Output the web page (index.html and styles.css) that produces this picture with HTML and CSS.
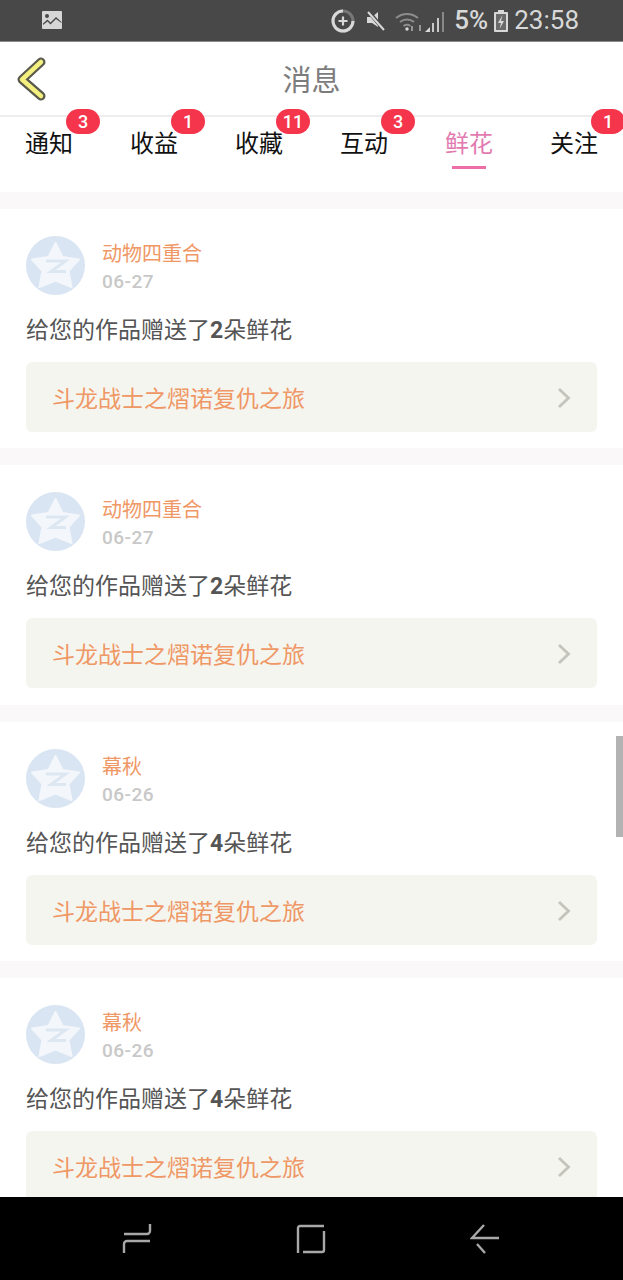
FILE: index.html
```html
<!DOCTYPE html>
<html lang="zh">
<head>
<meta charset="utf-8">
<title>消息</title>
<link rel="stylesheet" href="styles.css">
</head>
<body>
<svg class="defs" width="0" height="0">
  <symbol id="qz" viewBox="0 0 59 59">
    <circle cx="29.5" cy="29.5" r="29.5" fill="#d9e5f2"/>
    <path d="M29.5 7 L36.500 21 L53 23.500 L42.500 35 L45.500 51 L29.500 44.500 L13.500 51 L16.500 35 L6 23.500 L22.500 21 Z" fill="#f3f6fa" stroke="#f3f6fa" stroke-width="2" stroke-linejoin="round"/>
    <path d="M20 25 H39.500 L25 35.500 H40" fill="none" stroke="#dde7f2" stroke-width="3"/>
  </symbol>
  <symbol id="chev" viewBox="0 0 14 22">
    <path d="M2 2 L11.500 11 L2 20" fill="none" stroke="#c4c4bd" stroke-width="2.800"/>
  </symbol>
</svg>
<div class="screen">
  <div class="status">
    <svg class="st-img" width="20" height="21" viewBox="0 0 20 21"><path fill="#d6d6d6" d="M1 2h18a1 1 0 0 1 1 1v16a1 1 0 0 1-1 1H1a1 1 0 0 1-1-1V3a1 1 0 0 1 1-1z"/><circle cx="5" cy="7" r="2" fill="#484848"/><path fill="#484848" d="M1 14.500l4.500-4 3 3 5.500-5.500 5.500 5V4.500h0V14l-5.500-4-5.500 5.500-3-3-4.500 3.500z"/></svg>
    <div class="st-right">
      <svg width="26" height="26" viewBox="0 0 26 26"><circle cx="13" cy="13" r="10" fill="none" stroke="#777" stroke-width="3"/><path d="M13 3a10 10 0 1 0 10 10" fill="none" stroke="#d8d8d8" stroke-width="3"/><path d="M13 8.500v9M8.500 13h9" stroke="#d8d8d8" stroke-width="2.200"/></svg>
      <svg class="st-mute" width="24" height="24" viewBox="0 0 24 24"><path fill="#d8d8d8" d="M2 8h5l6-5v15l-6-4H2z"/><path d="M3 2l17 20" stroke="#484848" stroke-width="4"/><path d="M3 3l16 18" stroke="#d8d8d8" stroke-width="2"/></svg>
      <svg class="st-net" width="52" height="24" viewBox="0 0 52 24"><path d="M1 9a17 17 0 0 1 22 0M5 13a11 11 0 0 1 14 0M8.500 17a6 6 0 0 1 7 0" fill="none" stroke="#8d8d8d" stroke-width="2"/><circle cx="12" cy="20" r="1.700" fill="#d8d8d8"/><path d="M17 17v5M25 22v-6" stroke="#aaa" stroke-width="1.600"/><path fill="#d8d8d8" d="M30 23h5v-5z"/><path d="M38 23v-9M43 23V9" stroke="#c8c8c8" stroke-width="2"/><path d="M48 23V3" stroke="#888" stroke-width="2"/></svg>
      <span class="st-text st-pct">5%</span>
      <svg class="st-bat" width="14" height="22" viewBox="0 0 14 22"><path fill="#d8d8d8" d="M4 0h6v2h3a1 1 0 0 1 1 1v18a1 1 0 0 1-1 1H1a1 1 0 0 1-1-1V3a1 1 0 0 1 1-1h3z"/><path fill="#6a6a6a" d="M2 4h10v16H2z"/><path fill="#d8d8d8" d="M8.500 5L4 13h3l-1.500 6L10 11H7z"/></svg>
      <span class="st-text st-time">23:58</span>
    </div>
  </div>

  <header class="topbar">
    <svg class="back" width="30" height="44" viewBox="0 0 30 44"><path d="M25 5 L6 22.500 L25 39" fill="none" stroke="#5a5a4c" stroke-width="9" stroke-linecap="round" stroke-linejoin="round"/><path d="M25 5 L6 22.500 L25 39" fill="none" stroke="#f4f080" stroke-width="4.500" stroke-linecap="round" stroke-linejoin="round"/></svg>
    <h1 class="title">消息</h1>
  </header>

  <nav class="tabs">
    <div class="tab"><span>通知</span><b class="badge">3</b></div>
    <div class="tab"><span>收益</span><b class="badge">1</b></div>
    <div class="tab"><span>收藏</span><b class="badge">11</b></div>
    <div class="tab"><span>互动</span><b class="badge">3</b></div>
    <div class="tab active"><span>鲜花</span></div>
    <div class="tab"><span>关注</span><b class="badge">1</b></div>
  </nav>

  <main class="feed">
    <article class="card">
      <div class="who">
        <svg class="avatar"><use href="#qz"/></svg>
        <div class="meta"><div class="name">动物四重合</div><div class="date">06-27</div></div>
      </div>
      <p class="msg">给您的作品赠送了<b>2</b>朵鲜花</p>
      <div class="work"><span>斗龙战士之熠诺复仇之旅</span><svg class="more"><use href="#chev"/></svg></div>
    </article>
    <article class="card">
      <div class="who">
        <svg class="avatar"><use href="#qz"/></svg>
        <div class="meta"><div class="name">动物四重合</div><div class="date">06-27</div></div>
      </div>
      <p class="msg">给您的作品赠送了<b>2</b>朵鲜花</p>
      <div class="work"><span>斗龙战士之熠诺复仇之旅</span><svg class="more"><use href="#chev"/></svg></div>
    </article>
    <article class="card">
      <div class="who">
        <svg class="avatar"><use href="#qz"/></svg>
        <div class="meta"><div class="name">幕秋</div><div class="date">06-26</div></div>
      </div>
      <p class="msg">给您的作品赠送了<b>4</b>朵鲜花</p>
      <div class="work"><span>斗龙战士之熠诺复仇之旅</span><svg class="more"><use href="#chev"/></svg></div>
    </article>
    <article class="card">
      <div class="who">
        <svg class="avatar"><use href="#qz"/></svg>
        <div class="meta"><div class="name">幕秋</div><div class="date">06-26</div></div>
      </div>
      <p class="msg">给您的作品赠送了<b>4</b>朵鲜花</p>
      <div class="work"><span>斗龙战士之熠诺复仇之旅</span><svg class="more"><use href="#chev"/></svg></div>
    </article>
    <div class="thumb"></div>
  </main>

  <footer class="softkeys">
    <svg width="30" height="32" viewBox="0 0 30 32"><path d="M28 1v7a3 3 0 0 1-3 3H2M28 18H5a3 3 0 0 0-3 3v9" fill="none" stroke="#a8a8a8" stroke-width="2.400"/></svg>
    <svg width="30" height="30" viewBox="0 0 30 30"><path d="M28 2H4a2 2 0 0 0-2 2v25M7 28h19a2 2 0 0 0 2-2V7" fill="none" stroke="#a8a8a8" stroke-width="2.400"/></svg>
    <svg width="30" height="32" viewBox="0 0 30 32"><path d="M29 15H2L14 2M7 21l8 9" fill="none" stroke="#a8a8a8" stroke-width="2.400"/></svg>
  </footer>
</div>
</body>
</html>
```
FILE: styles.css
```css
* { box-sizing: border-box; }
html, body { margin: 0; padding: 0; }
body { font-family: "Noto Sans CJK SC", "Noto Sans", sans-serif; background: #fff; }
.defs { display: block; height: 0; }
.screen { width: 623px; height: 1280px; display: flex; flex-direction: column; overflow: hidden; }

.status { flex: 0 0 42px; background: #484848; border-bottom: 1px solid #8a8a8a; display: flex; align-items: center; justify-content: space-between; padding: 0 44px 0 42px; color: #d8d8d8; }
.st-img { margin-top: -2px; }
.st-right { display: flex; align-items: center; height: 41px; }
.st-mute { margin-left: 9px; }
.st-net { margin-left: 6px; }
.st-text { font-family: Roboto, sans-serif; font-size: 26px; font-weight: 500; line-height: 41px; }
.st-pct { margin-left: 7px; }
.st-bat { margin-left: 6px; }
.st-time { margin-left: 6px; font-weight: 400; }

.topbar { flex: 0 0 75px; display: flex; align-items: center; justify-content: center; position: relative; border-bottom: 2px solid #ededed; }
.back { position: absolute; left: 16px; top: 15px; }
.title { margin: 0; font-size: 29px; font-weight: 400; color: #7c7c7c; line-height: 73px; }

.tabs { flex: 0 0 75px; display: grid; grid-template-columns: repeat(6, 105px); margin-left: -3.5px; width: 630px; }
.tab { position: relative; display: flex; justify-content: center; padding-top: 7px; font-size: 24px; line-height: 36px; color: #111; }
.tab.active { color: #e27bb0; }
.tab.active::after { content: ""; position: absolute; left: 35px; top: 49px; width: 34px; height: 3px; background: #ee6fa8; }
.badge { position: absolute; left: 69.5px; top: -8px; width: 34px; height: 25px; border-radius: 12.5px; background: #f5354b; color: #fff; font-family: Roboto, sans-serif; font-size: 18px; font-weight: 500; line-height: 25px; text-align: center; }

.feed { flex: 1 1 auto; position: relative; overflow: hidden; min-height: 0; }
.card { height: 256.4px; border-top: 17px solid #faf8f8; padding: 27px 26px 0; }
.who { display: flex; height: 59px; }
.avatar { width: 59px; height: 59px; flex: none; }
.meta { margin-left: 17px; }
.name { font-size: 20px; line-height: 28px; height: 28px; margin-top: 3px; color: #ef9765; }
.date { margin-top: 2px; font-family: Roboto, sans-serif; font-size: 19px; font-weight: 500; line-height: 26px; color: #c8c8c8; letter-spacing: .5px; }
.msg { margin: 15px 0 0; font-size: 23px; line-height: 36px; color: #555; }
.msg b { font-family: Roboto, sans-serif; font-weight: 700; }
.work { margin-top: 13px; height: 70px; border-radius: 6px; background: #f5f5ef; display: flex; align-items: center; justify-content: space-between; padding: 0 26px; font-size: 23px; color: #ef9765; }
.more { width: 14px; height: 22px; flex: none; margin-top: 2px; }
.thumb { position: absolute; right: 0; top: 544px; width: 7px; height: 101px; background: #b3b3b3; }

.softkeys { flex: 0 0 83px; background: #000; display: flex; align-items: center; gap: 144px; padding-left: 122px; }
```
